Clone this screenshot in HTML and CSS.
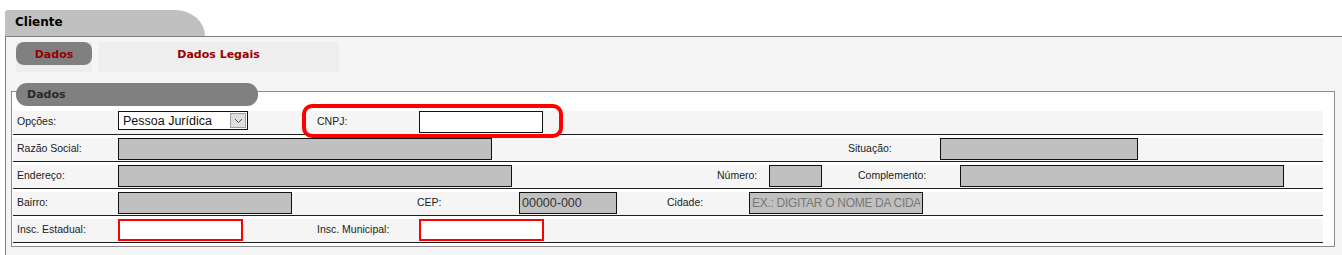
FILE: index.html
```html
<!DOCTYPE html>
<html lang="pt-BR">
<head>
<meta charset="utf-8">
<title>Cliente</title>
<link rel="stylesheet" href="styles.css">
</head>
<body>
<div class="page">
  <div class="tab">Cliente</div>
  <div class="panel">
    <div class="subtabs">
      <div class="subtab subtab-active"><span class="pill">Dados</span></div>
      <div class="subtab subtab-legal">Dados Legais</div>
    </div>

    <div class="fieldset">
      <div class="legend">Dados</div>
      <div class="rows">
        <div class="row">
          <span class="lbl lbl-first">Opções:</span>
          <div class="select">
            <span class="select-text">Pessoa Jurídica</span>
            <span class="select-arrow"><svg width="9" height="6" viewBox="0 0 9 6"><path d="M1 1 L4.5 4.5 L8 1" fill="none" stroke="#555" stroke-width="1"/></svg></span>
          </div>
          <div class="cnpj-group">
            <span class="lbl lbl-cnpj">CNPJ:</span>
            <input class="inp inp-white w-cnpj" type="text" readonly>
          </div>
        </div>

        <div class="row">
          <span class="lbl lbl-first">Razão Social:</span>
          <input class="inp w-razao" type="text" readonly>
          <span class="lbl lbl-situacao">Situação:</span>
          <input class="inp w-situacao" type="text" readonly>
        </div>

        <div class="row">
          <span class="lbl lbl-first">Endereço:</span>
          <input class="inp w-endereco" type="text" readonly>
          <span class="lbl lbl-numero">Número:</span>
          <input class="inp w-numero" type="text" readonly>
          <span class="lbl lbl-complemento">Complemento:</span>
          <input class="inp w-complemento" type="text" readonly>
        </div>

        <div class="row">
          <span class="lbl lbl-first">Bairro:</span>
          <input class="inp w-bairro" type="text" readonly>
          <span class="lbl lbl-cep">CEP:</span>
          <input class="inp w-cep" type="text" value="00000-000" readonly>
          <span class="lbl lbl-cidade">Cidade:</span>
          <input class="inp w-cidade" type="text" placeholder="EX.: DIGITAR O NOME DA CIDADE" readonly>
        </div>

        <div class="row">
          <span class="lbl lbl-first">Insc. Estadual:</span>
          <input class="inp inp-red w-insc" type="text" readonly>
          <span class="lbl lbl-municipal">Insc. Municipal:</span>
          <input class="inp inp-red w-insc" type="text" readonly>
        </div>
      </div>
    </div>
  </div>
</div>
</body>
</html>
```

FILE: styles.css
```css
html, body {
  margin: 0;
  padding: 0;
  background: #ffffff;
}

body {
  font-family: "Liberation Sans", Arial, sans-serif;
  color: #222;
  overflow: hidden;
}

.page {
  padding-top: 10px;
}

/* main tab */
.tab {
  margin-left: 5px;
  width: 190px;
  height: 26px;
  padding-left: 10px;
  background: #c0c0c0;
  border-top-left-radius: 3px;
  border-top-right-radius: 30px 26px;
  font-family: "DejaVu Sans", Verdana, sans-serif;
  font-weight: bold;
  font-size: 12px;
  line-height: 25px;
  color: #000;
}

.panel {
  margin-left: 5px;
  border-top: 1px solid #808080;
  border-left: 1px solid #808080;
  background: #f5f5f5;
  padding-top: 5px;
  padding-bottom: 8px;
}

/* sub tabs */
.subtabs {
  display: flex;
  gap: 6px;
  margin-left: 10px;
}

.subtab {
  height: 30px;
  background: #eeeeee;
  font-family: "DejaVu Sans", Verdana, sans-serif;
  font-weight: bold;
  font-size: 11px;
  color: #990000;
}

.subtab-active {
  width: 76px;
}

.pill {
  display: block;
  height: 23px;
  box-sizing: border-box;
  padding-top: 2px;
  line-height: 21px;
  text-align: center;
  background: #808080;
  border-radius: 8px;
}

.subtab-legal {
  width: 241px;
  padding-top: 2px;
  line-height: 21px;
  box-sizing: border-box;
  text-align: center;
}

/* fieldset */
.fieldset {
  margin-top: 19px;
  margin-left: 5px;
  width: 1324px;
  box-sizing: border-box;
  border: 1px solid #8c8c8c;
  background: #ffffff;
  padding-bottom: 3px;
}

.legend {
  margin-top: -9px;
  margin-left: 4px;
  width: 242px;
  height: 23px;
  box-sizing: border-box;
  padding-left: 11px;
  line-height: 23px;
  background: #808080;
  border-radius: 11px;
  font-family: "DejaVu Sans", Verdana, sans-serif;
  font-weight: bold;
  font-size: 11px;
  color: #2a2a2a;
}

.rows {
  margin-top: 5px;
  margin-left: 1px;
  width: 1310px;
}

.row {
  display: flex;
  align-items: flex-start;
  height: 23px;
  background: #f5f5f5;
  border-bottom: 1px solid #1e1e1e;
  margin-bottom: 3px;
}

.row:last-child {
  margin-bottom: 0;
}

.lbl {
  display: block;
  box-sizing: border-box;
  flex: none;
  font-size: 10.5px;
  line-height: 21px;
  color: #222;
  white-space: nowrap;
}

.lbl-first { width: 105px; padding-left: 4px; }
.lbl-cnpj { width: 102px; }
.lbl-situacao { margin-left: 356px; width: 92px; }
.lbl-numero { margin-left: 205px; width: 52px; }
.lbl-complemento { margin-left: 36px; width: 102px; }
.lbl-cep { margin-left: 125px; width: 102px; }
.lbl-cidade { margin-left: 50px; width: 82px; }
.lbl-municipal { margin-left: 74px; width: 102px; }

/* inputs */
.inp {
  display: block;
  flex: none;
  box-sizing: border-box;
  height: 22px;
  margin: 0;
  padding: 0 2px;
  border: 1px solid #111;
  border-radius: 0;
  background: #c0c0c0;
  font-family: "Liberation Sans", Arial, sans-serif;
  font-size: 12.5px;
  color: #333;
  outline: none;
}

.inp::placeholder {
  color: #777;
  font-size: 12px;
  letter-spacing: -0.3px;
}

.inp-white { background: #ffffff; }

.inp-red {
  background: #ffffff;
  border: 2px solid #ff0000;
}

.w-cnpj { width: 124px; }
.w-razao { width: 374px; }
.w-situacao { width: 198px; }
.w-endereco { width: 394px; }
.w-numero { width: 53px; }
.w-complemento { width: 324px; }
.w-bairro { width: 174px; }
.w-cep { width: 98px; }
.w-cidade { width: 174px; }
.w-insc { width: 125px; }

/* select */
.select {
  flex: none;
  display: flex;
  align-items: center;
  justify-content: space-between;
  width: 130px;
  height: 19px;
  box-sizing: border-box;
  border: 1px solid #111;
  background: #ffffff;
  padding-left: 4px;
  padding-right: 1px;
}

.select-text {
  font-size: 12.5px;
  color: #111;
  white-space: nowrap;
}

.select-arrow {
  display: flex;
  align-items: center;
  justify-content: center;
  width: 16px;
  height: 15px;
  box-sizing: border-box;
  border: 1px solid #a0a0a0;
  background: #dedede;
}

/* CNPJ highlight */
.cnpj-group {
  position: relative;
  display: flex;
  margin-left: 69px;
}

.cnpj-group::after {
  content: "";
  position: absolute;
  left: -15px;
  right: -20px;
  top: -7px;
  bottom: -5px;
  border: 4px solid #ff0000;
  border-radius: 10px;
  pointer-events: none;
}
```
